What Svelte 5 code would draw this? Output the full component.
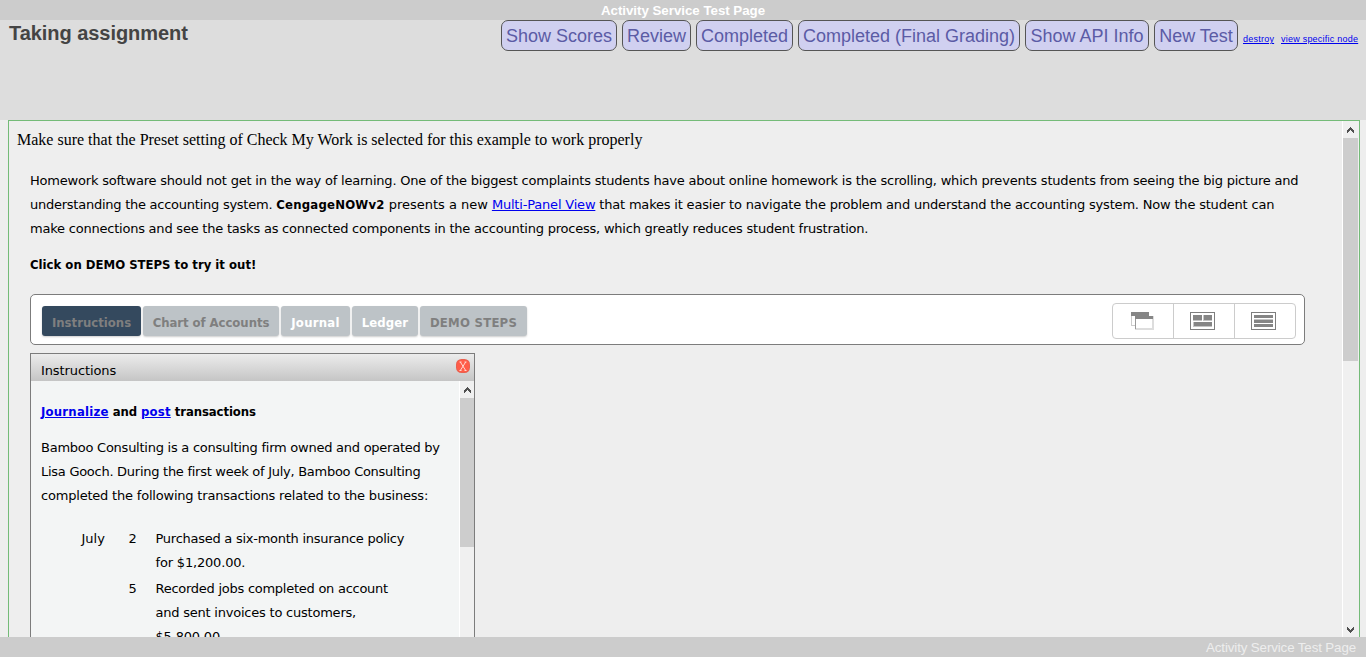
<script>
  const actions = [
    { label: 'Show Scores', w: 116 },
    { label: 'Review', w: 69 },
    { label: 'Completed', w: 97 },
    { label: 'Completed (Final Grading)', w: 222 },
    { label: 'Show API Info', w: 124 },
    { label: 'New Test', w: 84 }
  ];
  const tabs = [
    { label: 'Instructions', w: 99, active: true, ls: 0 },
    { label: 'Chart of Accounts', w: 136, ls: -0.05 },
    { label: 'Journal', w: 69, open: true, ls: 0.25 },
    { label: 'Ledger', w: 66, open: true, ls: 0.1 },
    { label: 'DEMO STEPS', w: 107, ls: 0.25 }
  ];
</script>

{#snippet arrow(down)}
  <svg class="arrow" class:down width="7" height="6" viewBox="0 0 7 6" shape-rendering="crispEdges">
    <path d="M3 0h1v1h1v1h1v1h1v3h-1v-1h-1v-1h-1v-1h-1v1h-1v1h-1v1h-1v-3h1v-1h1v-1h1z" fill="#505050" />
  </svg>
{/snippet}

<div class="page">
  <div class="top">Activity Service Test Page</div>
  <header>
    <h1>Taking assignment</h1>
    <nav>
      {#each actions as a}
        <button style="width:{a.w}px">{a.label}</button>
      {/each}
      <a class="destroy" href="#destroy">destroy</a>
      <a class="node" href="#node">view specific node</a>
    </nav>
  </header>

  <main>
    <div class="content">
      <p class="note">Make sure that the Preset setting of Check My Work is selected for this example to work properly</p>
      <div class="intro">
        <div class="l1">Homework software should not get in the way of learning. One of the biggest complaints students have about online homework is the scrolling, which prevents students from seeing the big picture and</div>
        <div class="l2"><span class="start">understanding the accounting system.</span> <b>CengageNOWv2</b> <span class="mid">presents a new</span> <a href="#panel">Multi-Panel View</a> that makes it easier to navigate the problem and understand the accounting system. Now the student can</div>
        <div class="l3">make connections and see the tasks as connected components in the accounting process, which greatly reduces student frustration.</div>
      </div>
      <p class="click"><b>Click on DEMO STEPS to try it out!</b></p>

      <div class="toolbar">
        <div class="tabs">
          {#each tabs as t}
            <button class="tab" class:active={t.active} class:open={t.open} style="width:{t.w}px;letter-spacing:{t.ls}px">{t.label}</button>
          {/each}
        </div>
        <div class="views">
          <span>
            <svg width="24" height="18" viewBox="0 0 24 18" shape-rendering="crispEdges">
              <path d="M0 3h1v11H0zM1 13h4v1H1z" fill="#ccc" />
              <rect width="18" height="4" fill="#868686" />
              <rect x="4" y="4" width="19" height="14" fill="#ddd" />
              <rect x="4" y="4" width="1" height="13" fill="#999" />
              <rect x="5" y="7" width="16" height="9" fill="#fff" />
              <rect x="4" y="4" width="18" height="3" fill="#868686" />
            </svg>
          </span>
          <span>
            <svg width="25" height="18" viewBox="0 0 25 18" shape-rendering="crispEdges">
              <rect x=".5" y=".5" width="24" height="17" fill="#fff" stroke="#7e7e7e" />
              <path d="M3 3h9v6H3zM13 3h9v6h-9zM3 10h19v5H3z" fill="#c4c4c4" />
              <path d="M3 3h9v5H3zM14 3h8v5h-8zM4 10h18v4H4z" fill="#858585" />
            </svg>
          </span>
          <span>
            <svg width="25" height="18" viewBox="0 0 25 18" shape-rendering="crispEdges">
              <rect x=".5" y=".5" width="24" height="17" fill="#fff" stroke="#7e7e7e" />
              <path d="M3 3h19v3H3zM3 8h19v3H3zM3 12h19v3H3z" fill="#858585" />
              <path d="M3 7h19v1H3z" fill="#c4c4c4" />
            </svg>
          </span>
        </div>
      </div>

      <section class="panel">
        <div class="head"><span class="title">Instructions</span><span class="close"><svg width="14" height="14" viewBox="0 0 14 14"><rect width="14" height="14" rx="5.5" fill="#e9604f" /><rect x="1" y="1" width="12" height="12" rx="4.5" fill="#ff5c48" /><path d="M4.3 3l5.4 8.5M9.7 3L4.3 11.5M3.5 3h2M8.5 3h2M3.5 11.5h2M8.5 11.5h2" stroke="#ffd8d0" fill="none" /></svg></span></div>
        <div class="body">
          <div class="text">
            <p class="lead"><b><a href="#journalize">Journalize</a> and <a href="#post">post</a> transactions</b></p>
            <div class="para">
              <div class="p1">Bamboo Consulting is a consulting firm owned and operated by</div>
              <div class="p2">Lisa Gooch. During the first week of July, Bamboo Consulting</div>
              <div class="p3">completed the following transactions related to the business:</div>
            </div>
            <div class="rows">
              <span>July</span><span>2</span>
              <div><div class="q1">Purchased a six-month insurance policy</div><div class="q2">for $1,200.00.</div></div>
              <span></span><span>5</span>
              <div><div class="q3">Recorded jobs completed on account</div><div class="q4">and sent invoices to customers,</div><div class="q5">$5,800.00.</div></div>
            </div>
          </div>
          <div class="scroll">{@render arrow(false)}<i></i></div>
        </div>
      </section>
    </div>
    <div class="scroll outer">{@render arrow(false)}<i></i>{@render arrow(true)}</div>
  </main>
  <footer>Activity Service Test Page</footer>
</div>

<style>
  :global(body) { margin: 0; background: #eee; overflow: hidden; }
  * { box-sizing: border-box; }
  p, h1 { margin: 0; }
  a { color: #00e; }
  b { font-family: "DejaVu Sans Condensed", "DejaVu Sans", sans-serif; font-stretch: condensed; }
  .page { width: 1366px; height: 657px; display: flex; flex-direction: column; background: #eee; font: 13px/24px "DejaVu Sans", sans-serif; color: #000; white-space: nowrap; overflow: hidden; }
  .top { height: 20px; flex: none; background: #ccc; color: #fff; text-align: center; font: bold 13.33px/21px "Liberation Sans", Arial, sans-serif; letter-spacing: -.03px; }
  header { height: 100px; flex: none; background: #ddd; display: flex; justify-content: space-between; align-items: flex-start; padding: 0 7px 0 9px; font-family: "Liberation Sans", Arial, sans-serif; }
  h1 { font-size: 20px; line-height: 26px; color: #444; letter-spacing: -.05px; }
  nav { display: flex; gap: 5px; align-items: flex-start; }
  nav button { height: 31px; padding: 1px 0 0; border: 1px solid #555; border-radius: 7px; background: #d0d0f0; color: #5b5ba5; font: 18px/28px "Liberation Sans", Arial, sans-serif; text-align: center; }
  nav a { font-size: 9px; line-height: 12px; margin-top: 13px; letter-spacing: .23px; }
  .destroy { width: 33px; }
  .node { width: 78px; }
  main { flex: 1; min-height: 0; margin: 0 6px 0 8px; border: 1px solid #74bb78; border-bottom: 0; display: flex; overflow: hidden; }
  .content { flex: 1; min-width: 0; padding-left: 8px; }
  .note { font: 16px/20px "Liberation Serif", "Times New Roman", serif; margin-top: 9px; }
  .intro { margin: 19px 0 0 13px; }
  .l1 { letter-spacing: -.204px; }
  .l2 { letter-spacing: -.19px; }
  .l2 .start { letter-spacing: -.25px; }
  .l2 b { letter-spacing: .22px; }
  .l2 .mid { letter-spacing: 0; }
  .l3 { letter-spacing: -.22px; }
  .click { margin: 12px 0 0 13px; }
  .toolbar { width: 1275px; height: 51px; margin: 17px 0 0 13px; border: 1px solid #7c7c7c; border-radius: 5px; background: #fff; display: flex; justify-content: space-between; padding: 8px 8px 0 11px; }
  .tabs { display: flex; gap: 2px; padding-top: 3px; }
  .tab { height: 30px; padding: 3px 0 0; border: 0; border-radius: 3px; background: #bdc3c7; color: #7f7f7f; font: bold 13px/27px "DejaVu Sans Condensed", "DejaVu Sans", sans-serif; font-stretch: condensed; box-shadow: 0 1px 2px #0003; }
  .tab.active { background: #34495e; }
  .tab.open { color: #fff; }
  .views { width: 184px; height: 36px; display: grid; grid-template-columns: 60px 61px 61px; border: 1px solid #ccc; border-radius: 4px; }
  .views span { display: flex; align-items: center; padding-left: 18px; }
  .views span + span { border-left: 1px solid #ccc; padding-left: 16px; }
  .panel { width: 445px; height: 400px; margin: 8px 0 0 13px; border: 1px solid #7c7c7c; background: #f3f5f5; }
  .head { height: 27px; display: flex; justify-content: space-between; padding: 5px 4px 0 10px; background: linear-gradient(#ececec, #c5c5c5); }
  .title { letter-spacing: -.1px; }
  .close { height: 14px; line-height: 0; }
  .body { display: flex; height: 372px; }
  .text { flex: 1; min-width: 0; padding: 19px 0 0 10px; }
  .lead b { letter-spacing: -.1px; }
  .lead a { letter-spacing: .22px; }
  .para { margin-top: 12px; }
  .p1 { letter-spacing: -.25px; }
  .p2 { letter-spacing: -.27px; }
  .p3 { letter-spacing: -.2px; }
  .rows { display: grid; grid-template-columns: 47px 27px auto; row-gap: 2px; margin: 19px 0 0 40.5px; }
  .q1, .q3 { letter-spacing: -.26px; }
  .q2, .q5 { letter-spacing: -.18px; }
  .q4 { letter-spacing: -.22px; }
  .scroll { width: 15px; flex: none; border-left: 1px solid #fff; background: #f0f0f0; display: flex; flex-direction: column; align-items: center; padding-top: 6px; }
  .scroll i { width: 14px; height: 149px; margin-top: 5px; background: #cdcdcd; }
  .arrow { flex: none; }
  .outer { width: 17px; padding-right: 1px; }
  .outer i { width: 15px; height: 223px; }
  .down { transform: scaleY(-1); margin: auto 0 4px; }
  footer { height: 20px; flex: none; background: #ccc; color: #eee; text-align: right; padding-right: 10px; font: 13.33px/21px "Liberation Sans", Arial, sans-serif; letter-spacing: -.12px; }
</style>
